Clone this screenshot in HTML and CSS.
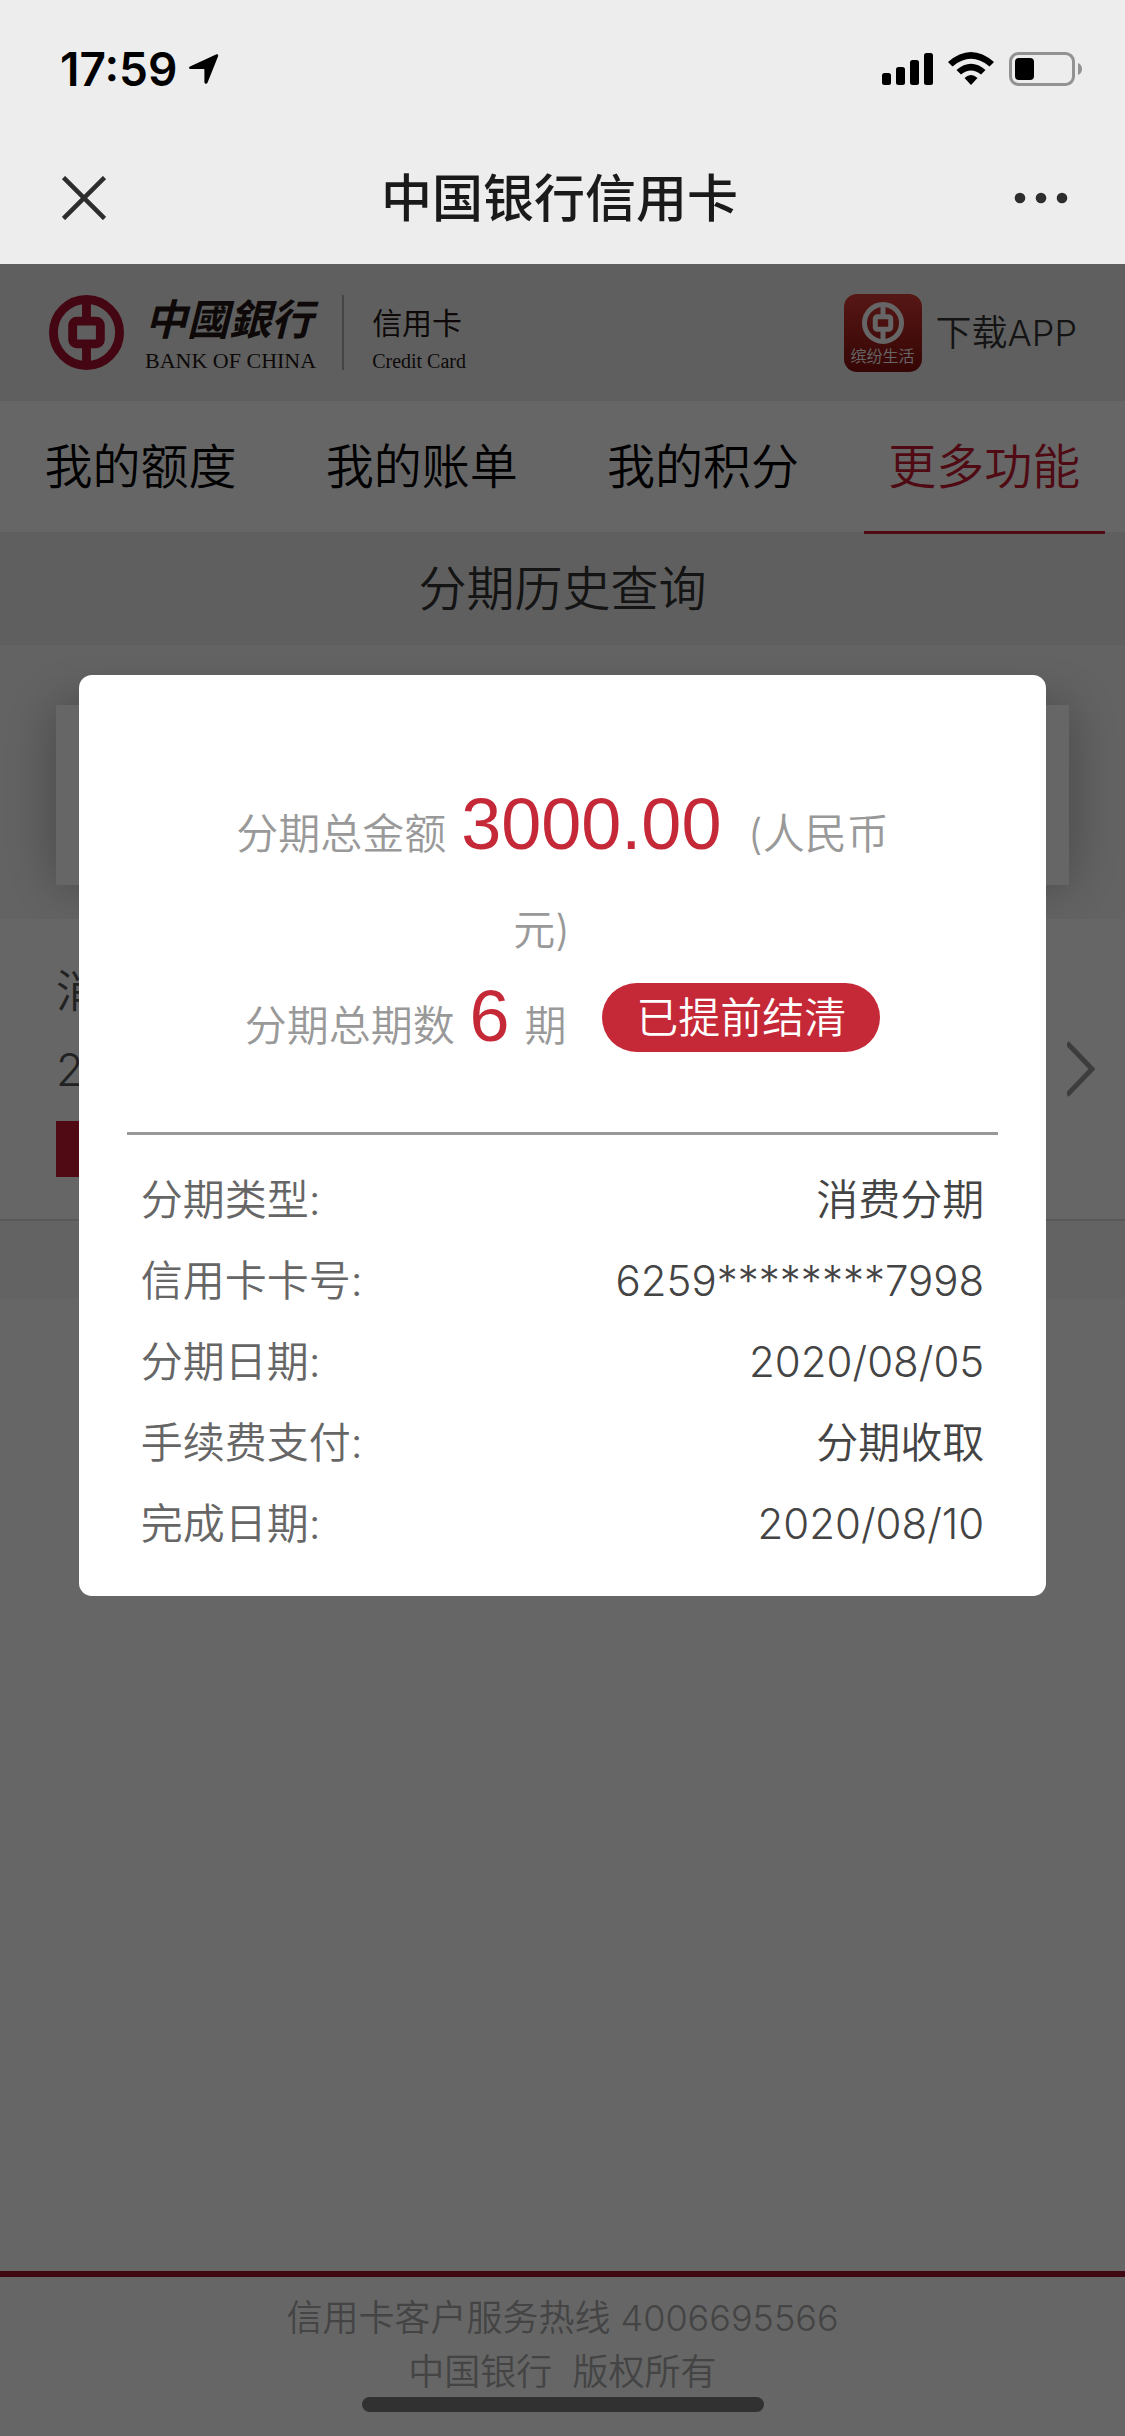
FILE: index.html
```html
<!DOCTYPE html>
<html lang="zh-CN">

<head>
    <meta charset="UTF-8">
    <meta name="viewport" content="width=device-width, initial-scale=1.0">
    <title>中国银行信用卡</title>
    <link rel="stylesheet" href="styles.css">
</head>

<body>
    <!-- emblem, used in the logo and in the app icon -->
    <svg class="defs" width="0" height="0" aria-hidden="true">
        <symbol id="emblem" viewBox="0 0 76 76">
            <g fill="none" stroke="currentColor" stroke-width="9">
                <circle cx="38" cy="38" r="33.5" />
                <rect x="24" y="26.5" width="28" height="23" rx="4" />
                <path d="M38 5v20M38 51v20" />
            </g>
        </symbol>
    </svg>

    <div class="top">
        <div class="status">
            <span class="time">17:59</span>
            <svg class="location" width="30" height="30" viewBox="0 0 30 30">
                <path d="M1 12.5 27 .4c1.600-.7 2.600.3 2 2L18.600 28.500c-.8 1.800-3.200 1.500-3.200-.6V15.800q0-.8-.8-.8H2C-.1 15-.6 13.200 1 12.500z" />
            </svg>
            <div class="status-icons">
                <svg width="51" height="34" viewBox="0 0 51 34">
                    <rect x="0" y="21" width="9" height="12" rx="2.500" />
                    <rect x="14" y="15" width="9" height="18" rx="2.500" />
                    <rect x="28" y="8" width="9" height="25" rx="2.500" />
                    <rect x="42" y="1" width="9" height="32" rx="2.500" />
                </svg>
                <svg width="46" height="34" viewBox="0 0 46 34">
                    <path d="M0 10Q23-10 46 10L41.500 14.500Q23-.8 4.500 14.500z" />
                    <path d="M8.500 18Q23 5.500 37.500 18L33 22.500Q23 14.500 13 22.500z" />
                    <path d="M16.500 26Q23 20 29.500 26L23 33z" />
                </svg>
                <svg width="74" height="34" viewBox="0 0 74 34">
                    <rect x="1.500" y="1.500" width="63" height="31" rx="8" fill="none" stroke="#929292" stroke-width="3" />
                    <rect x="6" y="6" width="19" height="22" rx="4" />
                    <path d="M69 11q4 1.500 4 6t-4 6z" fill="#929292" />
                </svg>
            </div>
        </div>
        <div class="navbar">
            <button class="nav-btn" aria-label="关闭">
                <svg width="44" height="44" viewBox="0 0 44 44">
                    <path d="M1.500 1.500 42.500 42.500M42.500 1.500 1.500 42.500" stroke="#2d2d2d" stroke-width="4.500" />
                </svg>
            </button>
            <h1>中国银行信用卡</h1>
            <button class="nav-btn" aria-label="更多">
                <svg width="54" height="12" viewBox="0 0 54 12" fill="#2d2d2d">
                    <circle cx="6" cy="6" r="5.300" />
                    <circle cx="27" cy="6" r="5.300" />
                    <circle cx="48" cy="6" r="5.300" />
                </svg>
            </button>
        </div>
    </div>

    <div class="page">
        <header class="header">
            <div class="logo">
                <svg class="logo-mark" width="77" height="75"><use href="#emblem" /></svg>
                <div class="logo-text">
                    <span class="brush">中國銀行</span>
                    <span class="latin">BANK OF CHINA</span>
                </div>
                <div class="logo-card">
                    <span>信用卡</span>
                    <span class="latin">Credit Card</span>
                </div>
            </div>
            <a class="download" href="#">
                <span class="app-icon">
                    <svg width="42" height="42"><use href="#emblem" /></svg>
                    <span>缤纷生活</span>
                </span>
                <span class="download-text">下载APP</span>
            </a>
        </header>

        <nav class="tabs">
            <a href="#">我的额度</a>
            <a href="#">我的账单</a>
            <a href="#">我的积分</a>
            <a href="#" class="active">更多功能</a>
        </nav>

        <h2 class="subtitle">分期历史查询</h2>

        <div class="card-area">
            <div class="card"></div>
        </div>

        <a class="record" href="#">
            <div>
                <p>消费分期</p>
                <p>2020/08/05</p>
                <span class="record-tag">已提前结清</span>
            </div>
            <svg width="28" height="58" viewBox="0 0 28 58">
                <path d="M0 3 25 29 0 55" fill="none" stroke="#999" stroke-width="5" />
            </svg>
        </a>
        <div class="spacer"></div>

        <footer class="footer">
            <p>信用卡客户服务热线 4006695566</p>
            <p>中国银行 &nbsp;版权所有</p>
        </footer>
    </div>

    <div class="mask">
        <div class="modal" role="dialog" aria-label="分期详情">
            <div class="summary">
                <p>分期总金额 <b>3000.00</b> &nbsp;(人民币元)<span class="tail"></span></p>
                <p>分期总期数 <b>6</b> 期 <span class="pill">已提前结清</span></p>
            </div>
            <dl class="details">
                <div><dt>分期类型:</dt><dd>消费分期</dd></div>
                <div><dt>信用卡卡号:</dt><dd>6259********7998</dd></div>
                <div><dt>分期日期:</dt><dd>2020/08/05</dd></div>
                <div><dt>手续费支付:</dt><dd>分期收取</dd></div>
                <div><dt>完成日期:</dt><dd>2020/08/10</dd></div>
            </dl>
        </div>
    </div>

    <div class="home-bar"></div>
</body>

</html>
```
FILE: styles.css
```css
* {
    box-sizing: border-box;
}

body {
    margin: 0;
    min-height: 100vh;
    display: flex;
    flex-direction: column;
    font-family: Inter, "Noto Sans CJK SC", sans-serif;
    font-weight: 350;
    background: #fff;
    color: #333;
}

h1, h2, p, dl, dd {
    margin: 0;
}

a {
    color: inherit;
    text-decoration: none;
}

svg {
    display: block;
}

.defs {
    position: absolute;
}

/* status bar and title bar stay above the mask */
.top {
    position: relative;
    z-index: 20;
    height: 264px;
    background: #ededed;
}

.status {
    display: flex;
    align-items: center;
    height: 138px;
    padding: 0 42px 0 60px;
    color: #000;
}

.time {
    font-size: 46px;
    font-weight: 600;
}

.location {
    margin-left: 12px;
}

.status-icons {
    display: flex;
    gap: 15px;
    margin-left: auto;
}

.navbar {
    display: flex;
    align-items: center;
    justify-content: space-between;
    height: 120px;
    padding: 0 57px;
}

.navbar h1 {
    padding: 0 6px 6px 0;
    font-size: 51px;
    font-weight: 500;
    color: #1a1a1a;
}

.nav-btn {
    display: flex;
    justify-content: center;
    width: 54px;
    padding: 0;
    border: 0;
    background: none;
}

.page {
    flex: 1;
    display: flex;
    flex-direction: column;
}

.header {
    display: flex;
    align-items: center;
    justify-content: space-between;
    height: 137px;
    padding: 0 48px;
    background: #eee;
}

.logo {
    display: flex;
    align-items: center;
    color: #231815;
}

.logo-mark {
    color: #ab0f2e;
}

.logo-text,
.logo-card {
    display: flex;
    flex-direction: column;
    justify-content: space-between;
    height: 75px;
    font-weight: 400;
}

.logo-text {
    padding: 0 26px 0 20px;
    border-right: 2px solid #aaa;
}

.logo-card {
    padding-left: 28px;
    font-size: 30px;
    line-height: 56px;
}

.brush {
    font-family: "Noto Sans CJK TC", sans-serif;
    font-size: 42px;
    font-style: italic;
    font-weight: 700;
    line-height: 44px;
}

.latin {
    font-family: "Liberation Serif", serif;
    font-size: 22px;
    line-height: 18px;
}

.logo-card .latin {
    font-size: 20px;
}

.download {
    display: flex;
    align-items: center;
    gap: 14px;
    font-size: 36px;
}

.download-text {
    padding-bottom: 6px;
}

.app-icon {
    display: flex;
    flex-direction: column;
    align-items: center;
    width: 78px;
    height: 78px;
    padding-top: 8px;
    border-radius: 13px;
    background: linear-gradient(#d83a35, #850f0c);
    color: #fff;
    font-size: 16px;
    line-height: 24px;
}

.tabs {
    display: flex;
    height: 131px;
    font-size: 48px;
    color: #000;
}

.tabs a {
    flex: 1;
    height: 133px;
    margin: 0 20px;
    line-height: 131px;
    text-align: center;
    white-space: nowrap;
}

.tabs .active {
    color: #c61932;
    border-bottom: 3px solid #c61932;
    z-index: 1;
}

.subtitle {
    background: #eee;
    font-size: 48px;
    font-weight: 350;
    line-height: 113px;
    text-align: center;
}

.card-area {
    padding: 60px 56px 34px;
    background: #f8f8f8;
}

.card {
    height: 180px;
    background: #fff;
    box-shadow: 0 0 50px rgba(0, 0, 0, 0.3);
}

.record {
    position: relative;
    display: flex;
    align-items: center;
    justify-content: space-between;
    padding: 34px 30px 34px 56px;
    border-bottom: 2px solid #dedede;
    background: #fff;
    color: #555;
    font-size: 45px;
    line-height: 78px;
}

.record-tag {
    display: block;
    width: 250px;
    height: 56px;
    margin: 12px 0 8px;
    background: #c61932;
    color: #fff;
    font-size: 36px;
    line-height: 56px;
    text-align: center;
}

.spacer {
    height: 78px;
    background: #f7f7f7;
}

.footer {
    margin-top: auto;
    padding: 14px 0 37px;
    border-top: 6px solid #9e142d;
    color: #aaa;
    font-size: 36px;
    line-height: 54px;
    text-align: center;
}

.mask {
    position: fixed;
    inset: 0;
    z-index: 10;
    padding-top: 675px;
    background: rgba(0, 0, 0, 0.6);
}

.modal {
    width: 86%;
    margin: 0 auto;
    padding: 0 48px 32px;
    border-radius: 13px;
    background: #fff;
    font-size: 42px;
}

.summary {
    padding: 111px 90px 58px;
    border-bottom: 3px solid #999;
    color: #999;
    line-height: 96px;
    text-align: center;
}

.summary b {
    margin: 0 3px;
    color: #c52938;
    font-family: "Liberation Sans", sans-serif;
    font-size: 72px;
    font-weight: 400;
    line-height: 1;
}

.tail {
    padding-right: 42px;
}

.pill {
    display: inline-block;
    margin-left: 24px;
    padding: 0 34px;
    border-radius: 35px;
    background: #c52938;
    color: #fff;
    line-height: 69px;
    vertical-align: 8px;
}

.details {
    padding: 24px 14px 0;
    line-height: 81px;
}

.details div {
    display: flex;
    justify-content: space-between;
}

.details dt {
    color: #666;
}

.details dd {
    color: #444;
}

.home-bar {
    position: fixed;
    bottom: 24px;
    left: 50%;
    z-index: 30;
    width: 402px;
    height: 15px;
    margin-left: -201px;
    border-radius: 8px;
    background: #313131;
}
```
